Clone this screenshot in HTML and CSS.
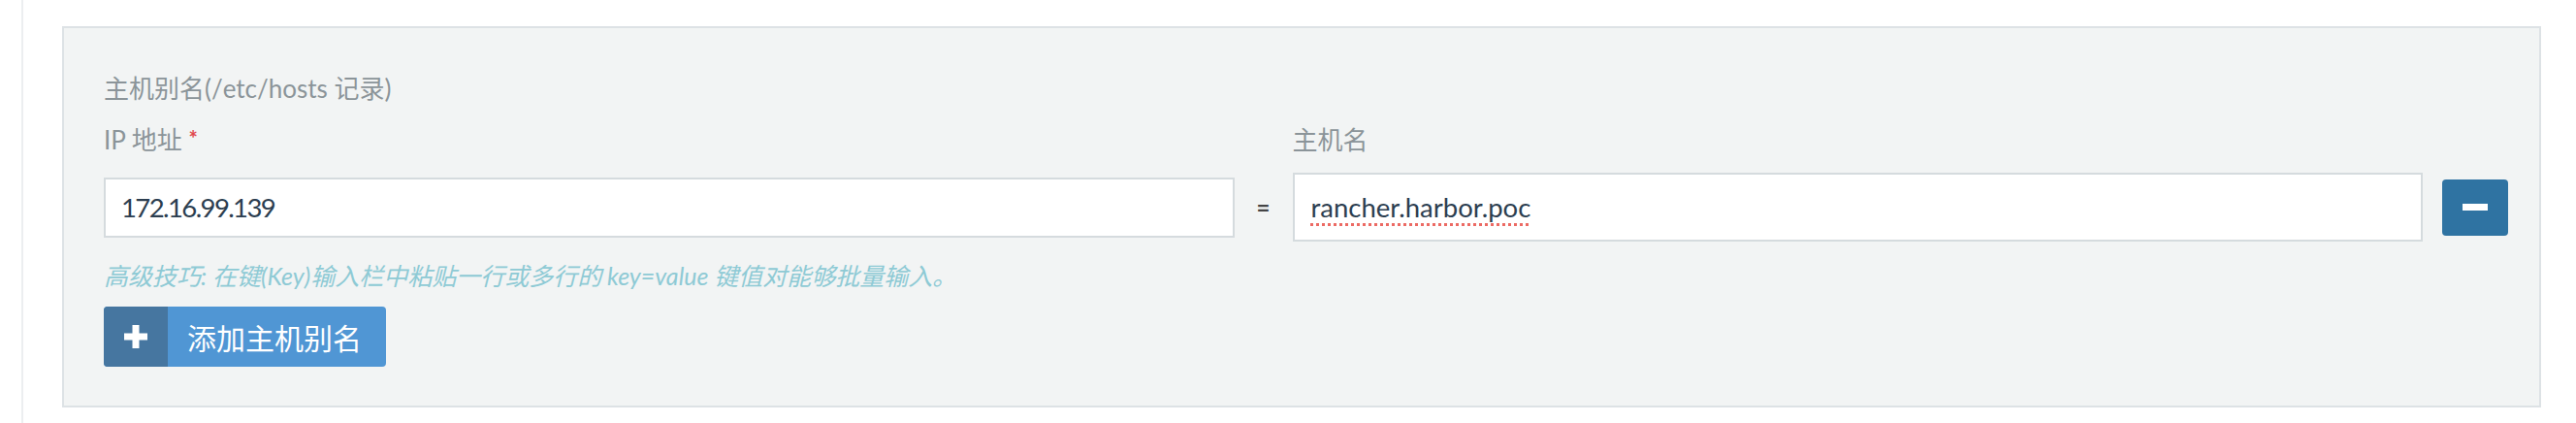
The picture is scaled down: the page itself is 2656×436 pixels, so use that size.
FILE: index.html
```html
<!DOCTYPE html>
<html lang="zh">
<head>
<meta charset="utf-8">
<title>主机别名</title>
<link rel="stylesheet" href="styles.css">
</head>
<body>
<div class="page">
  <div class="panel">
    <div class="title">主机别名(/etc/hosts 记录)</div>
    <div class="grid">
      <div class="lab">IP 地址 <span class="req">*</span></div>
      <div></div>
      <div class="lab">主机名</div>
      <div></div>
      <div></div>
      <div class="field ip"><span class="ip-val">172.16.99.139</span></div>
      <div class="eq">=</div>
      <div class="field host"><span class="spell">rancher.harbor.poc</span></div>
      <div></div>
      <button class="remove" type="button"><span class="minus"></span></button>
    </div>
    <div class="hint">高级技巧: 在键(Key)输入栏中粘贴一行或多行的 key=value 键值对能够批量输入。</div>
    <button class="add" type="button">
      <span class="add-icon"><svg width="24" height="24" viewBox="0 0 24 24"><path d="M12 0v24M0 12h24" stroke="#fff" stroke-width="7" fill="none"/></svg></span>
      <span class="add-text">添加主机别名</span>
    </button>
  </div>
</div>
</body>
</html>
```
FILE: styles.css
```css
html, body {
  margin: 0;
  padding: 0;
  background: #fff;
}
body {
  font-family: Lato, "Noto Sans CJK SC", sans-serif;
}
.page {
  margin-left: 22px;
  border-left: 2px solid #eceef0;
  height: 436px;
  box-sizing: border-box;
  padding: 27px 36px 0 40px;
  overflow: hidden;
}
.panel {
  border: 2px solid #dde2e5;
  background: #f2f4f4;
  padding: 46px 32px 40px 41px;
}
.title {
  font-size: 26px;
  line-height: 32px;
  color: #8b9499;
}
.grid {
  display: grid;
  grid-template-columns: 1fr 60px 1fr 20px 68px;
  align-items: center;
  margin-top: 20px;
}
.lab {
  font-size: 26px;
  line-height: 32px;
  color: #8b9499;
  margin-bottom: 18px;
}
.req {
  color: #e0474c;
  font-size: 22px;
  font-weight: bold;
  vertical-align: 3px;
}
.field {
  background: #fff;
  border: 2px solid #d5dbde;
  box-sizing: border-box;
  font-size: 27.5px;
  color: #2c3e50;
  display: flex;
  align-items: center;
}
.field.ip {
  height: 62px;
  padding-left: 16px;
}
.ip-val {
  letter-spacing: -1.6px;
}
.field.host {
  height: 71px;
  padding-left: 17px;
}
.spell {
  text-decoration: underline dotted #ec6a64;
  text-decoration-thickness: 3px;
  text-underline-offset: 6px;
}
.eq {
  text-align: center;
  font-size: 24px;
  font-weight: bold;
  color: #444;
}
.remove {
  width: 68px;
  height: 58px;
  border: 0;
  border-radius: 4px;
  background: #2f73a2;
  padding: 0;
  display: flex;
  align-items: center;
  justify-content: center;
}
.minus {
  display: block;
  width: 26px;
  height: 7px;
  background: #fff;
}
.hint {
  margin-top: 19px;
  font-size: 25px;
  line-height: 32px;
  font-style: italic;
  color: #8ecad5;
}
.add {
  margin-top: 16px;
  display: flex;
  height: 62px;
  padding: 0;
  border: 0;
  border-radius: 4px;
  overflow: hidden;
  background: #5096d4;
  font-family: Lato, "Noto Sans CJK SC", sans-serif;
}
.add-icon {
  width: 66px;
  background: #4676a0;
  display: flex;
  align-items: center;
  justify-content: center;
}
.add-text {
  color: #fff;
  font-size: 30px;
  padding: 0 25px 0 20px;
  display: flex;
  align-items: center;
}
```
